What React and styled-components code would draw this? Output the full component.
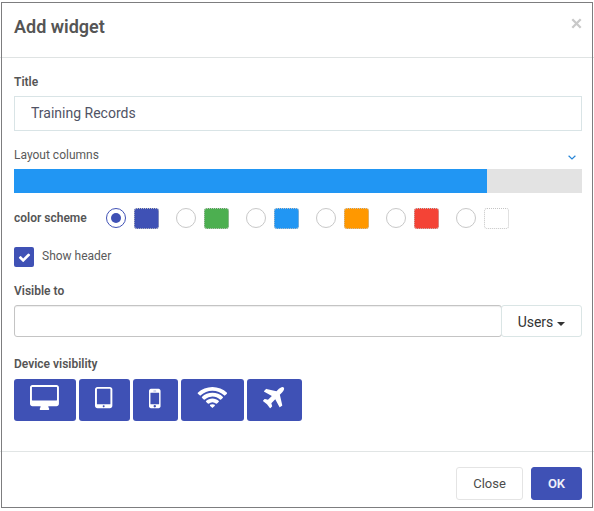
import React from "react";
import styled, { createGlobalStyle } from "styled-components";

const GlobalStyle = createGlobalStyle`
  * { box-sizing: border-box; }
  body {
    margin: 0;
    background: #fff;
    color: #5a5a5a;
    font-family: Roboto, "Liberation Sans", sans-serif;
    font-size: 12px;
    line-height: 16px;
  }
  button, input { font-family: inherit; margin: 0; }
`;

const Dialog = styled.section`
  position: relative;
  display: flex;
  flex-direction: column;
  width: 594px;
  height: 511px;
  padding-top: 3px;

  &::after {
    content: "";
    position: absolute;
    inset: 2px 1px 3px 1px;
    border: 1px solid #7d7d7f;
    pointer-events: none;
  }
`;

const Header = styled.header`
  display: flex;
  justify-content: space-between;
  align-items: flex-start;
  height: 55px;
  padding: 12px 12px 0 14px;
  border-bottom: 1px solid #dfe3e3;
`;

const Heading = styled.h4`
  margin: 0;
  color: #555;
  font-size: 18px;
  line-height: 24px;
  font-weight: 600;
`;

const Dismiss = styled.button`
  display: flex;
  padding: 3px 0;
  border: 0;
  background: none;
`;

const Body = styled.div`
  display: flex;
  flex-direction: column;
  height: 393px;
  padding: 16px 12px 0 14px;
`;

const Label = styled.label`
  color: #555;
  font-weight: 600;
  line-height: 16px;
`;

const TitleInput = styled.input`
  height: 35px;
  margin: 6px 0 16px;
  padding: 0 16px 2px;
  border: 1px solid #d9e4e6;
  outline: 0;
  color: #505365;
  font-size: 14px;
`;

const SliderHead = styled.div`
  display: flex;
  justify-content: space-between;
  align-items: center;
  height: 16px;
  padding-right: 6px;
`;

const Chevron = styled.svg`
  margin-top: 4px;
`;

const Track = styled.div`
  height: 24px;
  margin-top: 6px;
  background: #e3e3e3;
`;

const Fill = styled.div`
  width: 473px;
  height: 100%;
  background: #2196f3;
`;

const SchemeRow = styled.div`
  display: flex;
  align-items: center;
  height: 22px;
  margin-top: 14px;
`;

const SchemeLabel = styled(Label)`
  width: 92px;
`;

const SchemeOption = styled.div`
  display: flex;
  align-items: center;
  gap: 8px;
  width: 70px;
`;

const Radio = styled.span`
  display: grid;
  place-items: center;
  width: 20px;
  height: 20px;
  border: 1px solid ${(p) => (p.$checked ? "#3f51b5" : "#c8c8c8")};
  border-radius: 50%;

  &::after {
    content: "";
    width: 10px;
    height: 10px;
    border-radius: 50%;
    background: ${(p) => (p.$checked ? "#3f51b5" : "transparent")};
  }
`;

const Swatch = styled.span`
  width: 25px;
  height: 21px;
  border: 1px dotted #c4c4c4;
  border-radius: 3px;
  background: ${(p) => p.$color};
`;

const CheckRow = styled.div`
  display: flex;
  align-items: center;
  gap: 8px;
  height: 20px;
  margin-top: 18px;
`;

const Checkbox = styled.span`
  display: grid;
  place-items: center;
  width: 20px;
  height: 20px;
  border-radius: 2px;
  background: #3f51b5;
`;

const CheckText = styled.span`
  padding-bottom: 2px;
`;

const VisibleLabel = styled(Label)`
  margin-top: 16px;
`;

const InputGroup = styled.div`
  display: flex;
  height: 32px;
  margin: 6px 0 19px;
`;

const GroupInput = styled.input`
  width: 488px;
  border: 1px solid #c4c4c4;
  border-radius: 3px;
  outline: 0;
  box-shadow: inset 0 1px 1px rgba(0, 0, 0, 0.07);
`;

const UsersButton = styled.button`
  display: flex;
  align-items: center;
  justify-content: center;
  gap: 4px;
  width: 81px;
  margin-left: -1px;
  padding: 2px 0 0;
  border: 1px solid #dae5e5;
  border-radius: 3px;
  background: #fff;
  color: #333;
  font-size: 14px;
`;

const Caret = styled.span`
  border: 4px solid transparent;
  border-top-color: #333;
  border-bottom: 0;
  margin-top: 3px;
`;

const Devices = styled.div`
  display: flex;
  gap: 3px;
  margin-top: 7px;
`;

const DeviceButton = styled.button`
  display: flex;
  justify-content: center;
  width: ${(p) => p.$width}px;
  height: 42px;
  padding: 5.5px 1px 0 0;
  border: 0;
  border-radius: 3px;
  background: #3f51b5;
  color: #fff;
`;

const Footer = styled.footer`
  display: flex;
  justify-content: flex-end;
  gap: 8px;
  padding: 15px 12px 0;
  border-top: 1px solid #e1e5e5;
`;

const Action = styled.button`
  width: ${(p) => (p.$primary ? 51 : 67)}px;
  height: 33px;
  padding: 0;
  border: 1px solid ${(p) => (p.$primary ? "#3f51b5" : "#e4e4e4")};
  border-radius: 3px;
  background: ${(p) => (p.$primary ? "#3f51b5" : "#fff")};
  color: ${(p) => (p.$primary ? "#f0f1fa" : "#4c4c4c")};
  font-size: 13px;
  font-weight: ${(p) => (p.$primary ? 600 : 400)};
`;

const schemes = ["#3f51b5", "#4caf50", "#2196f3", "#ff9800", "#f44336", "#fff"];

const devices = [
  {
    name: "Desktop",
    width: 62,
    box: [0, 1920],
    path: "M1792 992v-832q0-13-9.5-22.5t-22.5-9.5h-1600q-13 0-22.5 9.5t-9.5 22.5v832q0 13 9.5 22.5t22.5 9.5h1600q13 0 22.5-9.5t9.5-22.5zm128-832v1088q0 66-47 113t-113 47h-544q0 37 16 77.5t32 71 16 43.5q0 26-19 45t-45 19h-512q-26 0-45-19t-19-45q0-14 16-44t32-70 16-78h-544q-66 0-113-47t-47-113v-1088q0-66 47-113t113-47h1600q66 0 113 47t47 113z",
  },
  {
    name: "Tablet",
    width: 51,
    box: [320, 1152],
    path: "M960 1408q0-26-19-45t-45-19-45 19-19 45 19 45 45 19 45-19 19-45zm384-160v-960q0-13-9.5-22.5t-22.5-9.5h-832q-13 0-22.5 9.5t-9.5 22.5v960q0 13 9.5 22.5t22.5 9.5h832q13 0 22.5-9.5t9.5-22.5zm128-960v1088q0 66-47 113t-113 47h-832q-66 0-113-47t-47-113v-1088q0-66 47-113t113-47h832q66 0 113 47t47 113z",
  },
  {
    name: "Mobile",
    width: 45,
    box: [512, 768],
    path: "M976 1408q0-33-23.5-56.5t-56.5-23.5-56.5 23.5-23.5 56.5 23.5 56.5 56.5 23.5 56.5-23.5 23.5-56.5zm208-160v-704q0-13-9.5-22.5t-22.5-9.5h-512q-13 0-22.5 9.5t-9.5 22.5v704q0 13 9.5 22.5t22.5 9.5h512q13 0 22.5-9.5t9.5-22.5zm-192-848q0-16-16-16h-160q-16 0-16 16t16 16h160q16 0 16-16zm288-16v1024q0 52-38 90t-90 38h-512q-52 0-90-38t-38-90v-1024q0-52 38-90t90-38h512q52 0 90 38t38 90z",
  },
  {
    name: "Online",
    width: 63,
    box: [0, 2048],
    path: "M1024 1523q-20 0-93-73.5t-73-93.5q0-32 62.5-54t103.5-22 103.5 22 62.5 54q0 20-73 93.5t-93 73.5zm270-271q-2 0-40-25t-101.5-50-128.5-25-128.5 25-101 50-40.5 25q-18 0-93.5-75t-75.5-93q0-13 10-23 78-77 196-121t233-44 233 44 196 121q10 10 10 23 0 18-75.5 93t-93.5 75zm273-272q-11 0-23-8-136-105-252-154.5t-268-49.5q-85 0-170.5 22t-149 53-113.5 62-79 53-31 22q-17 0-92-75t-75-93q0-12 10-22 132-132 320-205t380-73 380 73 320 205q10 10 10 22 0 18-75 93t-92 75zm271-271q-11 0-22-9-179-157-371.5-236.5t-420.5-79.5-420.5 79.5-371.5 236.5q-11 9-22 9-17 0-92.5-75t-75.5-93q0-13 10-23 187-186 445-288t527-102 527 102 445 288q10 10 10 23 0 18-75.5 93t-92.5 75z",
  },
  {
    name: "Offline",
    width: 55,
    box: [192, 1408],
    path: "M1568 160q44 52 12 148t-108 172l-161 161 160 696q5 19-12 33l-128 96q-7 6-19 6-4 0-7-1-15-3-21-16l-279-508-259 259 53 194q5 17-8 31l-96 96q-9 9-23 9h-2q-15-2-24-13l-189-252-252-189q-11-7-13-23-1-13 9-25l96-97q9-9 23-9 6 0 8 1l194 53 259-259-508-279q-14-8-17-24-2-16 9-27l128-128q14-13 30-8l665 159 160-160q76-76 172-108t148 12z",
  },
];

function DeviceIcon({ box: [x, w], path }) {
  return (
    <svg width={(w / 1792) * 27} height="27" viewBox={`${x} 0 ${w} 1792`} fill="currentColor">
      <path d={path} />
    </svg>
  );
}

export default function App() {
  return (
    <>
      <GlobalStyle />
      <Dialog>
        <Header>
          <Heading>Add widget</Heading>
          <Dismiss aria-label="Dismiss">
            <svg width="11" height="11" viewBox="0 0 11 11" stroke="#c9c9c9" strokeWidth="2.3">
              <path d="M1.3 1.3L9.7 9.7M9.7 1.3L1.3 9.7" />
            </svg>
          </Dismiss>
        </Header>
        <Body>
          <Label>Title</Label>
          <TitleInput defaultValue="Training Records" />
          <SliderHead>
            <span>Layout columns</span>
            <Chevron width="8" height="5" viewBox="0 0 8 5" fill="none" stroke="#2585d8" strokeWidth="1.2">
              <path d="M0.6 0.8L4 3.9L7.4 0.8" />
            </Chevron>
          </SliderHead>
          <Track>
            <Fill />
          </Track>
          <SchemeRow>
            <SchemeLabel>color scheme</SchemeLabel>
            {schemes.map((color, i) => (
              <SchemeOption key={color}>
                <Radio $checked={i === 0} />
                <Swatch $color={color} />
              </SchemeOption>
            ))}
          </SchemeRow>
          <CheckRow>
            <Checkbox>
              <svg width="13" height="13" viewBox="0 0 1792 1792" fill="#fff">
                <path d="M1671 566q0 40-28 68l-724 724-136 136q-28 28-68 28t-68-28l-136-136-362-362q-28-28-28-68t28-68l136-136q28-28 68-28t68 28l294 295 656-657q28-28 68-28t68 28l136 136q28 28 28 68z" />
              </svg>
            </Checkbox>
            <CheckText>Show header</CheckText>
          </CheckRow>
          <VisibleLabel>Visible to</VisibleLabel>
          <InputGroup>
            <GroupInput />
            <UsersButton>
              Users
              <Caret />
            </UsersButton>
          </InputGroup>
          <Label>Device visibility</Label>
          <Devices>
            {devices.map((d) => (
              <DeviceButton key={d.name} $width={d.width} aria-label={d.name}>
                <DeviceIcon box={d.box} path={d.path} />
              </DeviceButton>
            ))}
          </Devices>
        </Body>
        <Footer>
          <Action>Close</Action>
          <Action $primary>OK</Action>
        </Footer>
      </Dialog>
    </>
  );
}
